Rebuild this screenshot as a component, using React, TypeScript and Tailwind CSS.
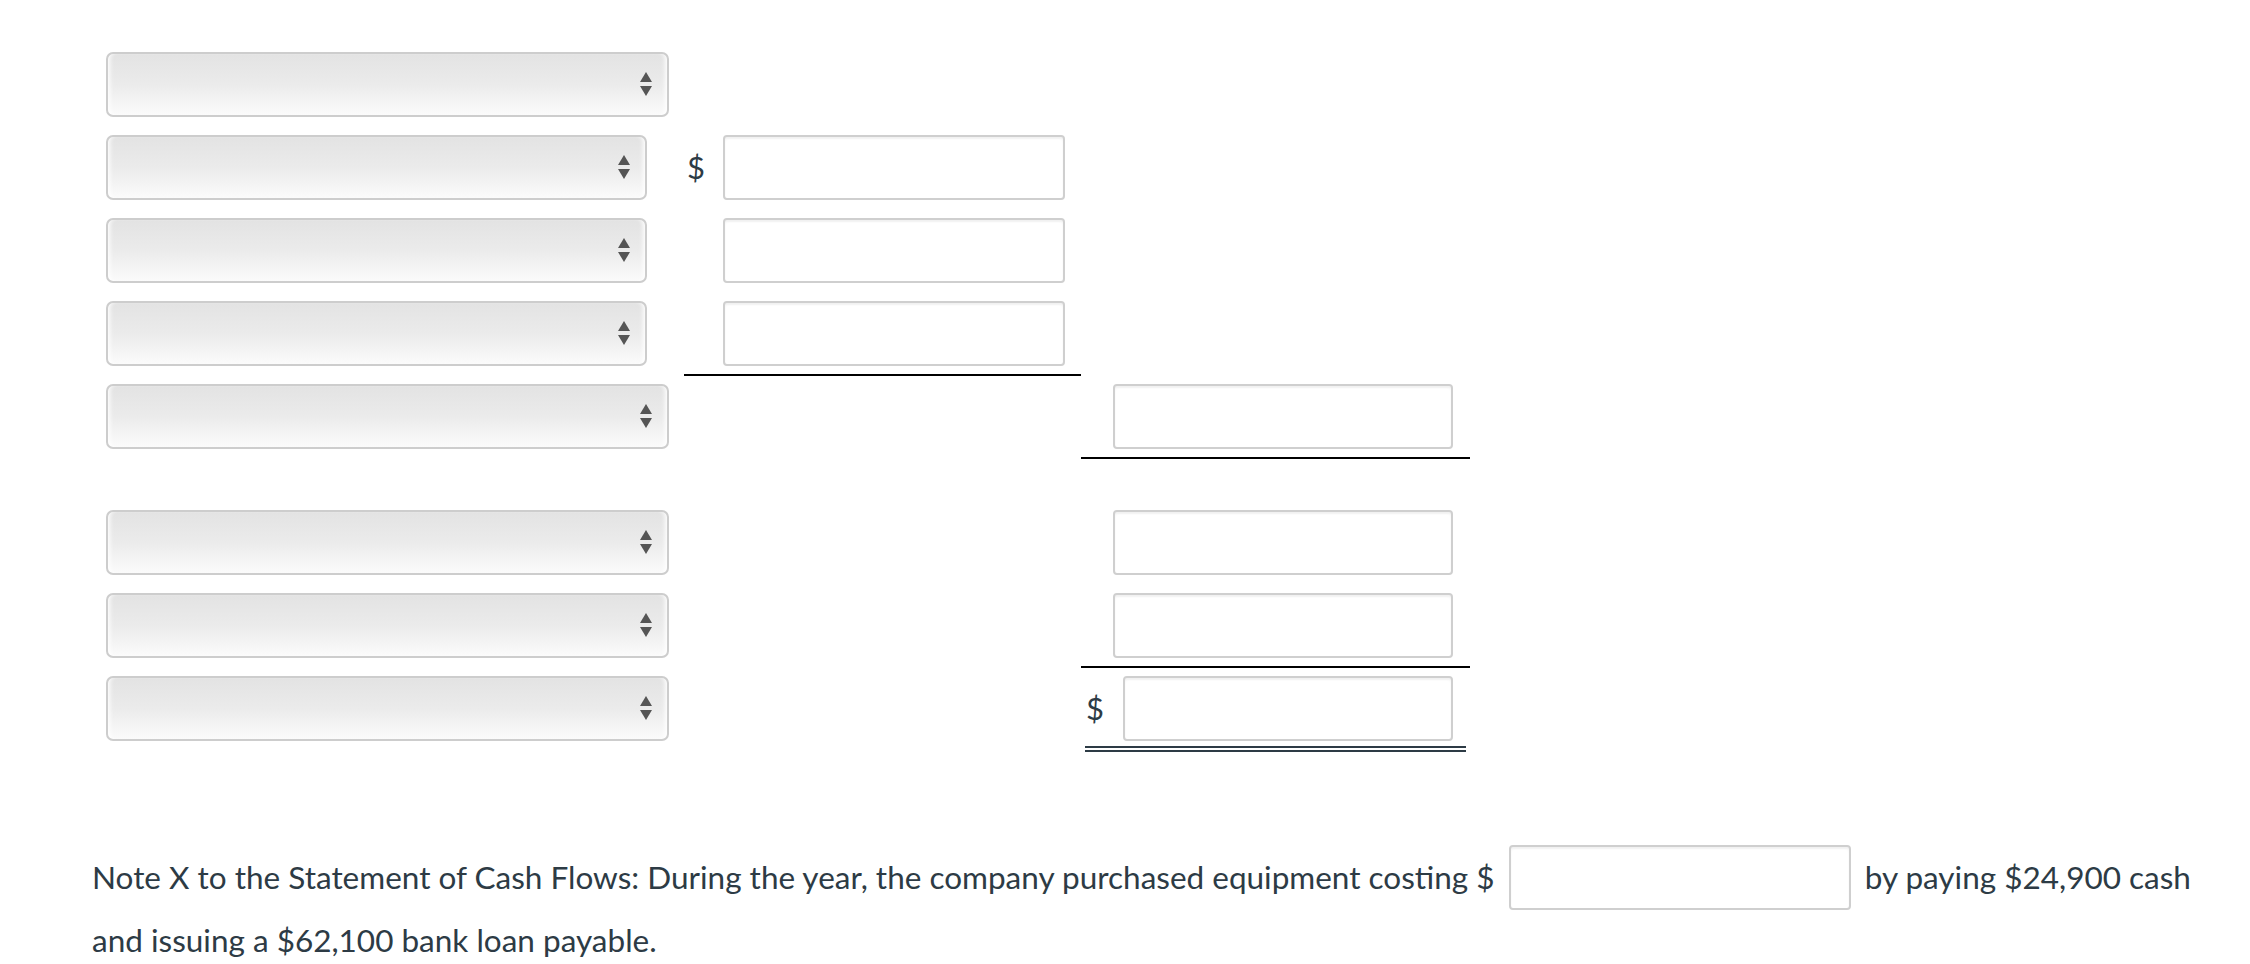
import React from 'react';

const font = { fontFamily: 'Lato, "Open Sans", sans-serif' };

function Arrows() {
  return (
    <svg width="12" height="25" viewBox="0 0 12 25" className="shrink-0">
      <path d="M6 0 L12 10 L0 10 Z" fill="#555555" />
      <path d="M0 14 L12 14 L6 24 Z" fill="#555555" />
    </svg>
  );
}

function Dropdown({ narrow }: { narrow?: boolean }) {
  return (
    <div
      className={`flex items-center justify-end h-[65px] pr-[15px] rounded-[7px] border-2 border-[#cdcdcd] bg-linear-to-b from-[#e3e3e3] via-[#ebebeb] to-[#fbfbfb] shadow-[inset_5px_0_4px_-3px_rgba(255,255,255,0.95),inset_-5px_0_4px_-3px_rgba(255,255,255,0.95)] ${
        narrow ? 'w-[541px]' : 'w-[563px]'
      }`}
    >
      <Arrows />
    </div>
  );
}

function Field({ w }: { w: string }) {
  return (
    <div
      className={`h-[65px] ${w} rounded-[4px] border-2 border-[#cfcfcf] bg-white shadow-[inset_0_2px_2px_rgba(0,0,0,0.06)]`}
    />
  );
}

function Dollar({ w }: { w: string }) {
  return <span className={`${w} text-[31px] leading-none text-[#2d3b45]`}>$</span>;
}

export default function App() {
  return (
    <div className="min-h-screen bg-white text-[#2d3b45]" style={font}>
      <div className="pl-[106px] pt-[44px]">
        <div className="grid grid-cols-[578px_397px_389px]">
          {/* row 1 */}
          <div className="py-[8px] border-b-2 border-transparent"><Dropdown /></div>
          <div className="py-[8px] border-b-2 border-transparent" />
          <div className="py-[8px] border-b-2 border-transparent" />

          {/* row 2 */}
          <div className="py-[8px] border-b-2 border-transparent"><Dropdown narrow /></div>
          <div className="py-[8px] border-b-2 border-transparent flex items-center">
            <Dollar w="w-[39px] pl-[3px]" />
            <Field w="w-[342px]" />
          </div>
          <div className="py-[8px] border-b-2 border-transparent" />

          {/* row 3 */}
          <div className="py-[8px] border-b-2 border-transparent"><Dropdown narrow /></div>
          <div className="py-[8px] border-b-2 border-transparent pl-[39px]"><Field w="w-[342px]" /></div>
          <div className="py-[8px] border-b-2 border-transparent" />

          {/* row 4 */}
          <div className="py-[8px] border-b-2 border-transparent"><Dropdown narrow /></div>
          <div className="pt-[8px] pb-[7px] border-b-2 border-black pl-[39px]"><Field w="w-[342px]" /></div>
          <div className="py-[8px] border-b-2 border-transparent" />

          {/* row 5 */}
          <div className="py-[8px] border-b-2 border-transparent"><Dropdown /></div>
          <div className="py-[8px] border-b-2 border-transparent" />
          <div className="pt-[8px] pb-[8px] border-b-2 border-black pl-[32px]"><Field w="w-[340px]" /></div>

          {/* spacer */}
          <div className="h-[43px]" />
          <div className="h-[43px]" />
          <div className="h-[43px]" />

          {/* row 6 */}
          <div className="py-[8px] border-b-2 border-transparent"><Dropdown /></div>
          <div className="py-[8px] border-b-2 border-transparent" />
          <div className="py-[8px] border-b-2 border-transparent pl-[32px]"><Field w="w-[340px]" /></div>

          {/* row 7 */}
          <div className="py-[8px] border-b-2 border-transparent"><Dropdown /></div>
          <div className="py-[8px] border-b-2 border-transparent" />
          <div className="pt-[8px] pb-[7px] border-b-2 border-black pl-[32px]"><Field w="w-[340px]" /></div>

          {/* row 8 */}
          <div className="py-[8px]"><Dropdown /></div>
          <div className="py-[8px]" />
          <div className="pt-[8px] pb-[5px] mx-[4px] border-b-[6px] border-double border-[#2d3b45] flex items-center">
            <Dollar w="w-[38px] pl-[1px]" />
            <Field w="w-[330px]" />
          </div>
        </div>
      </div>

      <p className="mt-[94px] pl-[92px] pr-[20px] text-[31.5px] leading-[63px] text-[#2d3b45]">
        Note X to the Statement of Cash Flows: During the year, the company purchased equipment costing ${' '}
        <span className="inline-block align-middle -my-[10px] mx-[6px] h-[65px] w-[342px] -translate-y-[4px] rounded-[4px] border-2 border-[#cfcfcf] bg-white shadow-[inset_0_2px_2px_rgba(0,0,0,0.06)]" />{' '}
        by paying $24,900 cash and issuing a $62,100 bank loan payable.
      </p>
    </div>
  );
}
